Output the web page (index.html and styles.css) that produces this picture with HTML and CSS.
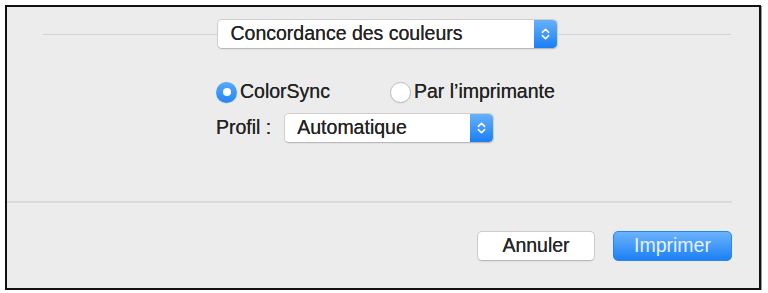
FILE: index.html
```html
<!DOCTYPE html>
<html lang="fr">
<head>
<meta charset="utf-8">
<title>Concordance des couleurs</title>
<link rel="stylesheet" href="styles.css">
</head>
<body>
<div class="dialog">
  <div class="header">
    <div class="hline"></div>
    <div class="popup popup-wide">
      <span class="popup-label">Concordance des couleurs</span>
      <span class="popup-arrows">
        <svg width="9" height="14" viewBox="0 0 9 14"><path d="M1.4 5.4 L4.5 2.3 L7.6 5.4 M1.4 8.6 L4.5 11.7 L7.6 8.6" fill="none" stroke="#fff" stroke-width="1.6" stroke-linecap="round" stroke-linejoin="round"/></svg>
      </span>
    </div>
    <div class="hline"></div>
  </div>

  <div class="options">
    <div class="radio-row">
      <label class="radio">
        <span class="radio-dot on"></span>
        <span class="radio-text">ColorSync</span>
      </label>
      <label class="radio radio-second">
        <span class="radio-dot"></span>
        <span class="radio-text">Par l’imprimante</span>
      </label>
    </div>
    <div class="profile-row">
      <span class="profile-label">Profil :</span>
      <div class="popup popup-narrow">
        <span class="popup-label">Automatique</span>
        <span class="popup-arrows">
          <svg width="9" height="14" viewBox="0 0 9 14"><path d="M1.4 5.4 L4.5 2.3 L7.6 5.4 M1.4 8.6 L4.5 11.7 L7.6 8.6" fill="none" stroke="#fff" stroke-width="1.6" stroke-linecap="round" stroke-linejoin="round"/></svg>
        </span>
      </div>
    </div>
  </div>

  <div class="separator"></div>

  <div class="buttons">
    <button class="btn btn-cancel">Annuler</button>
    <button class="btn btn-print">Imprimer</button>
  </div>
</div>
</body>
</html>
```

FILE: styles.css
```css
html, body {
  margin: 0;
  padding: 0;
  background: #ffffff;
}

body {
  font-family: "Liberation Sans", Arial, Helvetica, sans-serif;
  font-size: 19.5px;
  color: #232323;
}

.dialog {
  box-sizing: border-box;
  margin: 5px 0 0 5px;
  width: 756px;
  height: 285px;
  border: 2px solid #111;
  background: #ececec;
  box-shadow: 1px 1px 0 #9a9a9a;
  display: flex;
  flex-direction: column;
}

.header {
  display: flex;
  align-items: center;
  padding: 12px 28px 0 36px;
}

.hline {
  flex: 1;
  height: 1px;
  background: #d3d3d3;
}

.popup {
  box-sizing: border-box;
  display: flex;
  align-items: stretch;
  height: 30px;
  background: #ffffff;
  border: 1px solid #cfcfcf;
  border-bottom-color: #b9b9b9;
  border-radius: 5px;
  box-shadow: 0 1px 1px rgba(0, 0, 0, 0.06);
  overflow: hidden;
}

.popup-wide {
  width: 341px;
}

.popup-narrow {
  width: 210px;
}

.popup-label {
  flex: 1;
  display: flex;
  align-items: center;
  padding-left: 13px;
  line-height: 1;
  text-shadow: 0 0 0.4px #333;
}

.popup-narrow .popup-label {
  padding-left: 12px;
}

.popup-arrows {
  width: 23px;
  display: flex;
  align-items: center;
  justify-content: center;
  background: linear-gradient(#68b0fb, #1a7ff5);
  border-radius: 0 4px 4px 0;
}

.options {
  margin: 33px 0 0 209px;
  display: flex;
  flex-direction: column;
  gap: 11px;
}

.radio-row {
  display: flex;
  align-items: center;
  height: 20px;
}

.radio {
  display: flex;
  align-items: center;
  gap: 3px;
}

.radio-second {
  margin-left: 60px;
}

.radio-dot {
  box-sizing: border-box;
  width: 21px;
  height: 21px;
  border-radius: 50%;
  background: #ffffff;
  border: 1px solid #bdbdbd;
  box-shadow: 0 1px 1px rgba(0, 0, 0, 0.06);
  display: flex;
  align-items: center;
  justify-content: center;
}

.radio-dot.on {
  border: none;
  background: linear-gradient(#5aa7fa, #2287f5);
}

.radio-dot.on::after {
  content: "";
  width: 8px;
  height: 8px;
  border-radius: 50%;
  background: #ffffff;
}

.radio-text,
.profile-label {
  line-height: 1;
  text-shadow: 0 0 0.4px #333;
}

.profile-row {
  display: flex;
  align-items: center;
  gap: 13px;
}

.separator {
  margin: 58px 27px 0 0;
  height: 2px;
  background: #dedede;
  border-top: 1px solid #d6d6d6;
  box-sizing: border-box;
}

.buttons {
  display: flex;
  justify-content: flex-end;
  gap: 18px;
  padding: 28px 27px 0 0;
}

.btn {
  box-sizing: border-box;
  height: 30px;
  border-radius: 5px;
  font-family: inherit;
  font-size: 19.5px;
  line-height: 1;
  padding: 0;
  margin: 0;
  cursor: default;
}

.btn-cancel {
  width: 118px;
  background: #ffffff;
  color: #262626;
  border: 1px solid #cbcbcb;
  border-bottom-color: #b8b8b8;
  box-shadow: 0 1px 1px rgba(0, 0, 0, 0.05);
  text-shadow: 0 0 0.4px #333;
}

.btn-print {
  width: 119px;
  color: #e9f2ff;
  border: 1px solid #2a84f0;
  background: linear-gradient(#6cb3fb, #1b80f5);
}
```
